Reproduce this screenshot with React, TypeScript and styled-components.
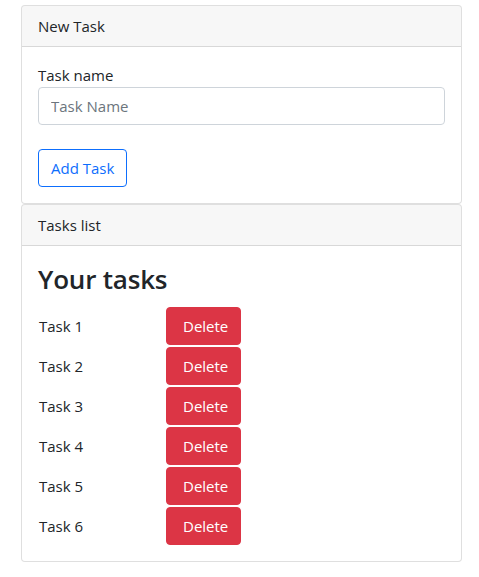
import React from "react";
import styled, { createGlobalStyle } from "styled-components";

const Global = createGlobalStyle`
  html, body { margin: 0; padding: 0; background: #fff; }
  body {
    font-family: "Open Sans", "Noto Sans", "Liberation Sans", sans-serif;
    font-size: 15px;
    line-height: 24px;
    color: #212529;
  }
  * { box-sizing: border-box; }
`;

const Page = styled.div`
  padding: 5px 17px 0 21px;
  width: 479px;
`;

const Card = styled.section`
  border: 1px solid rgba(0, 0, 0, 0.125);
  border-radius: 4px;
  background: #fff;
  overflow: hidden;
`;

const CardHeader = styled.div`
  padding: 8px 16px;
  background: rgba(0, 0, 0, 0.03);
  border-bottom: 1px solid rgba(0, 0, 0, 0.125);
  line-height: 24px;
`;

const CardBody = styled.div`
  padding: 16px;
`;

const Label = styled.label`
  display: block;
  line-height: 24px;
`;

const Input = styled.input`
  display: block;
  width: 100%;
  height: 38px;
  padding: 6px 12px;
  font: inherit;
  color: #212529;
  border: 1px solid #ced4da;
  border-radius: 4px;
  margin: 0 0 24px;
  outline: none;
  &::placeholder { color: #6c757d; opacity: 1; }
`;

const Button = styled.button<{ $variant: "outline" | "danger" }>`
  font: inherit;
  line-height: 24px;
  height: 38px;
  border-radius: 4px;
  cursor: pointer;
  border: 1px solid ${(p) => (p.$variant === "danger" ? "#dc3545" : "#0d6efd")};
  background: ${(p) => (p.$variant === "danger" ? "#dc3545" : "transparent")};
  color: ${(p) => (p.$variant === "danger" ? "#fff" : "#0d6efd")};
  padding: ${(p) => (p.$variant === "danger" ? "6px 12px 6px 16px" : "6px 12px")};
`;

const Heading = styled.h2`
  margin: 0 0 10px;
  font-size: 26px;
  font-weight: 600;
  letter-spacing: -0.2px;
  line-height: 34.8px;
`;

const List = styled.div`
  display: flex;
  flex-direction: column;
  gap: 2px;
`;

const Row = styled.div`
  display: grid;
  grid-template-columns: 128px auto;
  align-items: center;
  justify-content: start;
`;

const TaskName = styled.span`
  padding-left: 1px;
`;

const tasks = ["Task 1", "Task 2", "Task 3", "Task 4", "Task 5", "Task 6"];

export default function App() {
  return (
    <>
      <Global />
      <Page>
        <Card>
          <CardHeader>New Task</CardHeader>
          <CardBody>
            <Label htmlFor="task-name">Task name</Label>
            <Input id="task-name" placeholder="Task Name" />
            <Button $variant="outline">Add Task</Button>
          </CardBody>
        </Card>
        <Card>
          <CardHeader>Tasks list</CardHeader>
          <CardBody>
            <Heading>Your tasks</Heading>
            <List>
              {tasks.map((t) => (
                <Row key={t}>
                  <TaskName>{t}</TaskName>
                  <Button $variant="danger">Delete</Button>
                </Row>
              ))}
            </List>
          </CardBody>
        </Card>
      </Page>
    </>
  );
}
